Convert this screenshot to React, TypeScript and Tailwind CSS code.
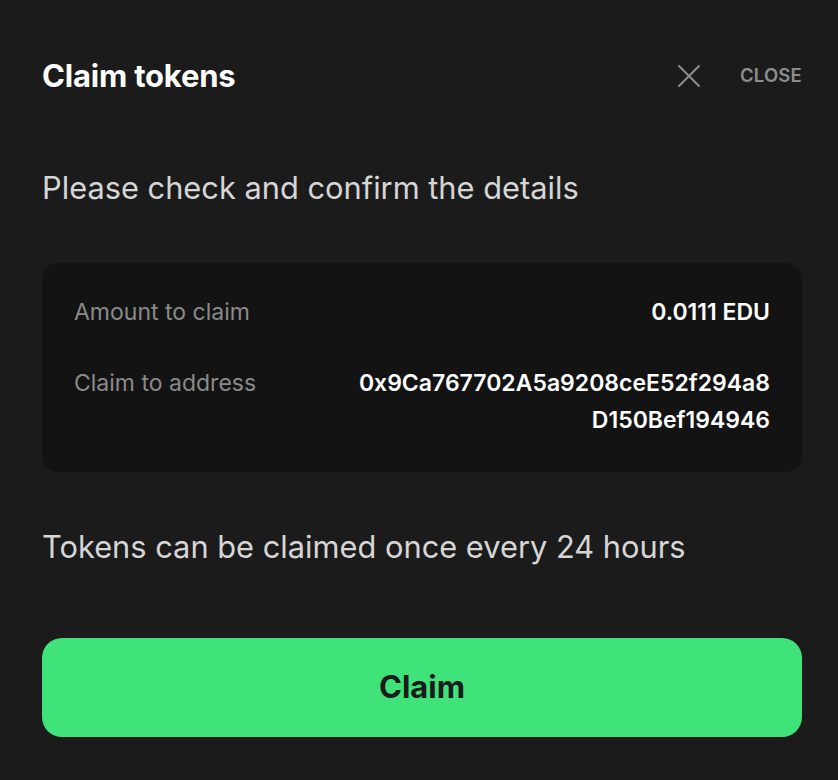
import React from 'react';

const CloseIcon: React.FC = () => (
  <svg width="24" height="24" viewBox="0 0 24 24" fill="none" stroke="currentColor" strokeWidth="2" strokeLinecap="round">
    <path d="M2 2L22 22M22 2L2 22" />
  </svg>
);

const DetailRow: React.FC<{ label: string; value: string; wide?: boolean }> = ({ label, value, wide }) => (
  <div className="flex justify-between items-start gap-8">
    <span className="text-[#8a8a8a] shrink-0">{label}</span>
    <span className={`text-white font-semibold text-right ${wide ? 'break-all max-w-[424px]' : ''}`}>{value}</span>
  </div>
);

export default function App() {
  return (
    <div
      className="min-h-screen w-full bg-[#1b1b1b] pl-[42px] pr-[36px] pt-[56px] pb-[40px]"
      style={{ fontFamily: 'Inter, "Noto Sans", sans-serif' }}
    >
      <div className="flex items-center justify-between h-10">
        <h1 className="text-[31px] font-bold text-white tracking-[-0.2px]">Claim tokens</h1>
        <button className="flex items-center gap-[39px] text-[#8c8c8c]">
          <CloseIcon />
          <span className="text-[18.5px] font-semibold tracking-[0.2px]">CLOSE</span>
        </button>
      </div>

      <p className="mt-[74px] text-[30.8px] leading-9 text-[#d6d6d6]">Please check and confirm the details</p>

      <div className="mt-[57px] rounded-2xl bg-[#131313] px-[32px] pt-[31px] pb-[33px] text-[23px] leading-[37px] flex flex-col gap-[34px]">
        <DetailRow label="Amount to claim" value="0.0111 EDU" />
        <DetailRow label="Claim to address" value="0x9Ca767702A5a9208ceE52f294a8D150Bef194946" wide />
      </div>

      <p className="mt-[57px] text-[30.8px] leading-9 text-[#d6d6d6]">Tokens can be claimed once every 24 hours</p>

      <button className="mt-[73px] w-full h-[99px] rounded-[20px] bg-[#40e27a] text-[31px] font-bold text-[#1b1b1b]">
        Claim
      </button>
    </div>
  );
}
